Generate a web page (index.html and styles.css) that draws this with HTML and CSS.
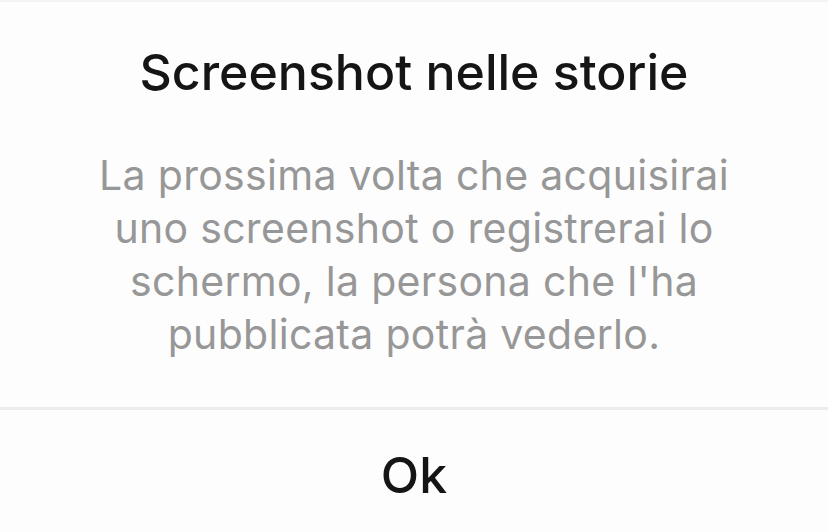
FILE: index.html
```html
<!DOCTYPE html>
<html lang="it">
<head>
<meta charset="utf-8">
<link rel="stylesheet" href="styles.css">
</head>
<body>
<div class="dialog">
  <div class="content">
    <h1 class="title">Screenshot nelle storie</h1>
    <p class="message">La prossima volta che acquisirai<br>uno screenshot o registrerai lo<br>schermo, la persona che l'ha<br>pubblicata potrà vederlo.</p>
  </div>
  <div class="divider"></div>
  <div class="action">Ok</div>
</div>
</body>
</html>
```
FILE: styles.css
```css
html, body {
  margin: 0;
  padding: 0;
  background: #fdfdfd;
}
.dialog {
  width: 828px;
  height: 532px;
  display: flex;
  flex-direction: column;
  font-family: Inter, "Liberation Sans", sans-serif;
  border-top: 2px solid #f3f3f3;
  box-sizing: border-box;
}
.content {
  height: 405px;
  display: flex;
  flex-direction: column;
  align-items: center;
  box-sizing: border-box;
  padding-top: 40px;
}
.title {
  margin: 0;
  font-size: 50px;
  line-height: 60px;
  font-weight: 500;
  color: #151515;
}
.message {
  margin: 47px 0 0;
  font-size: 41px;
  line-height: 53px;
  font-weight: 400;
  color: #979797;
  text-align: center;
  letter-spacing: 0.3px;
}
.divider {
  height: 3px;
  background: #ececec;
}
.action {
  flex: 1;
  display: flex;
  align-items: center;
  justify-content: center;
  font-size: 50px;
  font-weight: 500;
  color: #151515;
  padding-top: 8px;
}
```
